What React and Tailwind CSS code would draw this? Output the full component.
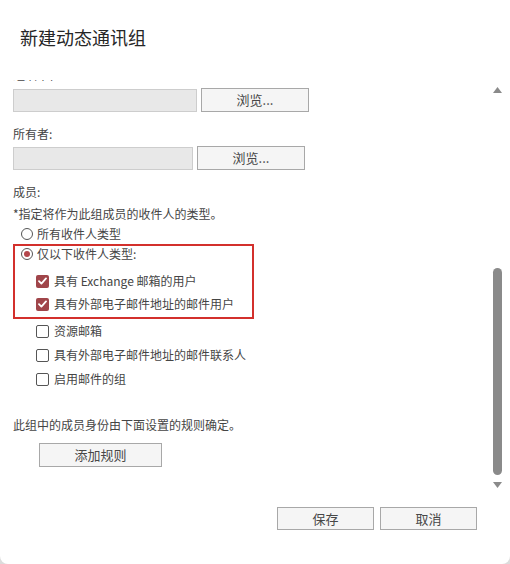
const font = { fontFamily: '"Noto Sans CJK SC", "Noto Sans", sans-serif' };

function Radio({ checked }) {
  return (
    <span className="flex h-[12px] w-[12px] shrink-0 items-center justify-center rounded-full border border-[#555] bg-white">
      {checked && <span className="h-[6px] w-[6px] rounded-full bg-[#b4474c]" />}
    </span>
  );
}

function Check({ checked }) {
  if (!checked) {
    return <span className="h-[13px] w-[13px] shrink-0 rounded-[2px] border border-[#555] bg-white" />;
  }
  return (
    <span className="flex h-[13px] w-[13px] shrink-0 items-center justify-center rounded-[2px] bg-[#a0454a]">
      <svg width="9" height="8" viewBox="0 0 9 8">
        <path d="M1 4.2 L3.4 6.6 L8 1.4" fill="none" stroke="#fff" strokeWidth="1.8" strokeLinecap="round" strokeLinejoin="round" />
      </svg>
    </span>
  );
}

function CheckRow({ label, checked, className = "" }) {
  return (
    <div className={`flex h-[16px] items-center gap-[5px] leading-[16px] ${className}`}>
      <Check checked={checked} />
      <span>{label}</span>
    </div>
  );
}

const btn =
  "flex items-center justify-center border border-[#a8a8a8] bg-[#f5f5f5] text-[13px] text-[#474747]";
const field = "h-[23px] border border-[#cdcdcd] bg-[#e8e8e8]";

export default function App() {
  return (
    <div className="h-[564px] w-[510px] bg-[#dcdcdc]" style={font}>
      <div className="flex h-[564px] w-[510px] flex-col rounded-b-[8px] bg-white text-[12px] text-[#454545]">
        <div className="pl-[20px] pt-[25px] text-[18px] leading-[24px] text-[#262626]">新建动态通讯组</div>

        <div className="mt-[31px] flex h-[412px] overflow-hidden">
          <div className="flex-1 pl-[13px]">
            {/* scrolled partly out of view */}
            <div className="mt-[-13px] leading-[16px]">组织单位:</div>
            <div className="mt-[5px] flex items-center gap-[4px]">
              <div className={`${field} w-[184px]`} />
              <button className={`${btn} h-[24px] w-[108px]`}>浏览...</button>
            </div>

            <div className="mt-[14px] leading-[16px]">所有者:</div>
            <div className="mt-[4px] flex items-center gap-[4px]">
              <div className={`${field} w-[180px]`} />
              <button className={`${btn} h-[24px] w-[108px]`}>浏览...</button>
            </div>

            <div className="mt-[14px] leading-[16px]">成员:</div>
            <div className="mt-[6px] leading-[16px]">*指定将作为此组成员的收件人的类型。</div>
            <div className="mt-[4px] flex h-[16px] items-center gap-[4px] pl-[8px]">
              <Radio />
              <span>所有收件人类型</span>
            </div>

            <div className="mt-[2px] w-[241px] border-2 border-[#d3302c] pb-[5px]">
              <div className="flex h-[16px] items-center gap-[4px] pl-[6px]">
                <Radio checked />
                <span>仅以下收件人类型:</span>
              </div>
              <CheckRow className="mt-[11px] pl-[21px]" checked label="具有 Exchange 邮箱的用户" />
              <CheckRow className="mt-[7px] pl-[21px]" checked label="具有外部电子邮件地址的邮件用户" />
            </div>

            <CheckRow className="mt-[4px] pl-[23px]" label="资源邮箱" />
            <CheckRow className="mt-[8px] pl-[23px]" label="具有外部电子邮件地址的邮件联系人" />
            <CheckRow className="mt-[8px] pl-[23px]" label="启用邮件的组" />

            <div className="mt-[30px] leading-[16px]">此组中的成员身份由下面设置的规则确定。</div>
            <button className={`${btn} ml-[26px] mt-[10px] h-[24px] w-[123px]`}>添加规则</button>
          </div>

          <div className="flex w-[21px] flex-col items-center pr-[4px]">
            <svg className="mt-[7px]" width="9" height="6" viewBox="0 0 9 6">
              <path d="M4.5 0 L9 6 L0 6 Z" fill="#8a8a8a" />
            </svg>
            <div className="mt-[175px] h-[207px] w-[9px] rounded-full bg-[#8a8a8a]" />
            <svg className="mt-[7px]" width="9" height="6" viewBox="0 0 9 6">
              <path d="M0 0 L9 0 L4.5 6 Z" fill="#8a8a8a" />
            </svg>
          </div>
        </div>

        <div className="mt-[15px] flex justify-end gap-[6px] pr-[33px]">
          <button className={`${btn} h-[23px] w-[97px]`}>保存</button>
          <button className={`${btn} h-[23px] w-[97px]`}>取消</button>
        </div>
      </div>
    </div>
  );
}
